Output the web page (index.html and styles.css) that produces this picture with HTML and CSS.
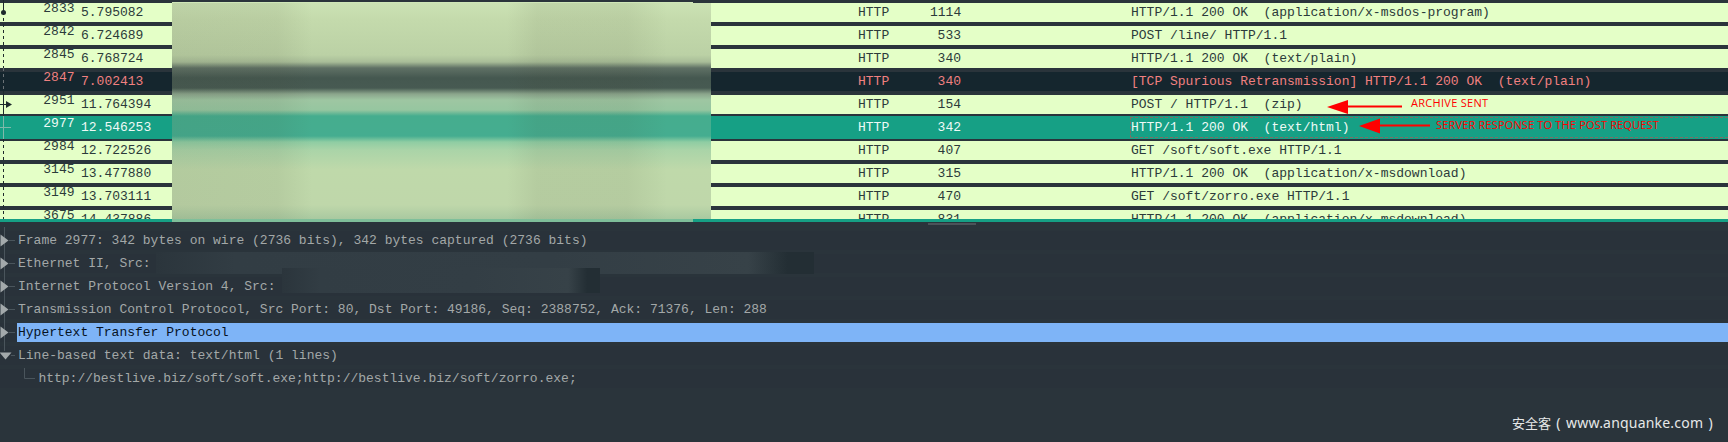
FILE: index.html
```html
<!DOCTYPE html>
<html lang="en">
<head>
<meta charset="utf-8">
<title>Packet capture</title>
<link rel="stylesheet" href="styles.css">
</head>
<body>
<main class="app">
  <section class="packets">
    <div class="row"><span class="num">2833</span><span class="time">5.795082</span><span class="proto">HTTP</span><span class="len">1114</span><span class="info">HTTP/1.1 200 OK  (application/x-msdos-program)</span></div>
    <div class="row"><span class="num">2842</span><span class="time">6.724689</span><span class="proto">HTTP</span><span class="len">533</span><span class="info">POST /line/ HTTP/1.1</span></div>
    <div class="row"><span class="num">2845</span><span class="time">6.768724</span><span class="proto">HTTP</span><span class="len">340</span><span class="info">HTTP/1.1 200 OK  (text/plain)</span></div>
    <div class="row bad"><span class="num">2847</span><span class="time">7.002413</span><span class="proto">HTTP</span><span class="len">340</span><span class="info">[TCP Spurious Retransmission] HTTP/1.1 200 OK  (text/plain)</span></div>
    <div class="row"><span class="num">2951</span><span class="time">11.764394</span><span class="proto">HTTP</span><span class="len">154</span><span class="info">POST / HTTP/1.1  (zip)</span></div>
    <div class="row sel"><span class="num">2977</span><span class="time">12.546253</span><span class="proto">HTTP</span><span class="len">342</span><span class="info">HTTP/1.1 200 OK  (text/html)</span></div>
    <div class="row"><span class="num">2984</span><span class="time">12.722526</span><span class="proto">HTTP</span><span class="len">407</span><span class="info">GET /soft/soft.exe HTTP/1.1</span></div>
    <div class="row"><span class="num">3145</span><span class="time">13.477880</span><span class="proto">HTTP</span><span class="len">315</span><span class="info">HTTP/1.1 200 OK  (application/x-msdownload)</span></div>
    <div class="row"><span class="num">3149</span><span class="time">13.703111</span><span class="proto">HTTP</span><span class="len">470</span><span class="info">GET /soft/zorro.exe HTTP/1.1</span></div>
    <div class="row"><span class="num">3675</span><span class="time">14.437886</span><span class="proto">HTTP</span><span class="len">831</span><span class="info">HTTP/1.1 200 OK  (application/x-msdownload)</span></div>
  </section>
  <div class="strip"></div>
  <div class="thumb"></div>

  <section class="tree">
    <div class="node"><svg class="exp" viewBox="0 0 17 19"><path class="tl" d="M4.5 -4V23M9 9.5H15"/><path class="tri" d="M0.5 3.500L8.500 9.500L0.500 15.500Z"/></svg><span class="label">Frame 2977: 342 bytes on wire (2736 bits), 342 bytes captured (2736 bits)</span></div>
    <div class="node"><svg class="exp" viewBox="0 0 17 19"><path class="tl" d="M4.5 -4V23M9 9.5H15"/><path class="tri" d="M0.5 3.500L8.500 9.500L0.500 15.500Z"/></svg><span class="label">Ethernet II, Src:</span></div>
    <div class="node"><svg class="exp" viewBox="0 0 17 19"><path class="tl" d="M4.5 -4V23M9 9.5H15"/><path class="tri" d="M0.5 3.500L8.500 9.500L0.500 15.500Z"/></svg><span class="label">Internet Protocol Version 4, Src:</span></div>
    <div class="node"><svg class="exp" viewBox="0 0 17 19"><path class="tl" d="M4.5 -4V23M9 9.5H15"/><path class="tri" d="M0.5 3.500L8.500 9.500L0.500 15.500Z"/></svg><span class="label">Transmission Control Protocol, Src Port: 80, Dst Port: 49186, Seq: 2388752, Ack: 71376, Len: 288</span></div>
    <div class="node on"><svg class="exp" viewBox="0 0 17 19"><path class="tl" d="M4.5 -4V23M9 9.5H15"/><path class="tri" d="M0.5 3.500L8.500 9.500L0.500 15.500Z"/></svg><span class="label">Hypertext Transfer Protocol</span></div>
    <div class="node"><svg class="exp" viewBox="0 0 17 19"><path class="tl" d="M4.5 -4V5M11 9.500H15"/><path class="tri" d="M-0.500 6.500H11.500L5.500 13.500Z"/></svg><span class="label">Line-based text data: text/html (1 lines)</span></div>
    <div class="node child"><svg class="exp wide" viewBox="0 0 37 19"><path class="tl" d="M24.5 -1V9.5H35"/></svg><span class="label">http://bestlive.biz/soft/soft.exe;http://bestlive.biz/soft/zorro.exe;</span></div>
  </section>

  <div class="smear"><div class="smear-tone"></div></div>
  <div class="redact eth"></div>
  <div class="redact ip"></div>

  <svg class="gutter" viewBox="0 0 16 222">
    <path class="g-solid" d="M3.5 0V12"/>
    <path class="g-dash" d="M3.5 12V68"/>
    <path class="g-grey" d="M3.5 68V91"/>
    <path class="g-solid" d="M3.5 91V116M0 104.5H6"/>
    <path class="g-head" d="M6 101L12 104.5L6 108Z"/>
    <circle class="g-head" cx="3.5" cy="12.5" r="2.5"/>
    <path class="g-pale" d="M3.5 116V139M0 127.5H11"/>
    <path class="g-dash" d="M3.5 139V219"/>
  </svg>

  <svg class="arrows" viewBox="0 0 1728 140">
    <path class="a-line" d="M1346 106.500H1402"/>
    <path class="a-head" d="M1327 107L1348 100V114Z"/>
    <path class="a-line" d="M1378 125.500H1430"/>
    <path class="a-head" d="M1359 126L1380 118.500V133.500Z"/>
  </svg>
  <span class="note n1">ARCHIVE SENT</span>
  <span class="note n2">SERVER RESPONSE TO THE POST REQUEST</span>
  <span class="mark"><span class="cjk">安全客</span> ( www.anquanke.com )</span>
</main>
</body>
</html>
```
FILE: styles.css
```css
html, body {
  margin: 0;
  padding: 0;
  background: #2a343b;
}

.app {
  position: relative;
  width: 1728px;
  height: 442px;
  overflow: hidden;
  font: 13px/20px "Liberation Mono", monospace;
  color: #a3a8a8;
}

.packets {
  height: 216px;
  padding-top: 3px;
  overflow: hidden;
}

.row {
  position: relative;
  display: grid;
  grid-template-columns: 74.5px 783.5px 72px 31px 1fr;
  height: 19px;
  margin-bottom: 4px;
  background: #e4ffc7;
  color: #2b3a3a;
  white-space: pre;
}

.row.bad {
  background: #15262e;
  color: #f08080;
}

.row.sel {
  height: 23px;
  margin: -2px 0 2px;
  padding-top: 2px;
  box-sizing: border-box;
  background: #16a085;
  color: #eefaf6;
}

.row.sel::after {
  content: "";
  position: absolute;
  left: 1130px;
  right: 0;
  top: 1px;
  bottom: 1px;
  border: 1px dashed #c0504f;
  border-right: 0;
  opacity: 0.6;
}

.num {
  text-align: right;
  line-height: 11px;
}

.time {
  padding-left: 6.5px;
}

.len {
  text-align: right;
}

.info {
  padding-left: 170px;
}

.strip {
  height: 3px;
  background: #16a085;
}

.thumb {
  position: absolute;
  left: 928px;
  top: 223px;
  width: 48px;
  height: 2px;
  background: #4b5359;
}

.tree {
  display: flex;
  flex-direction: column;
  gap: 4px;
  padding-top: 9px;
}

.node {
  display: flex;
  height: 19px;
  background: #29323a;
  white-space: pre;
}

.exp {
  flex: none;
  width: 17px;
  height: 19px;
  overflow: visible;
}

.exp.wide {
  width: 37px;
}

.tl {
  fill: none;
  stroke: #4a555c;
  stroke-width: 1;
}

.tri {
  fill: #a3a9ab;
}

.label {
  flex: 1;
  padding-left: 1px;
}

.node.on .label {
  background: #7eb4f7;
  color: #06121f;
}

.node.child .label {
  padding-left: 1.4px;
}

.smear {
  position: absolute;
  left: 172px;
  top: 3px;
  width: 539px;
  height: 216px;
  background: linear-gradient(180deg,
    #cbe2b4 0, #c4daac 17px, #bbd1a5 52px, #a8bd98 59px, #5f7165 65px,
    #455850 75px, #475a52 85px, #8ba58c 91px, #9ec6a2 97px, #96c6a0 107px,
    #45ad8e 113px, #45ad90 133px, #8fcda3 139px, #aad4a8 147px, #bfd9aa 167px,
    #bfd7aa 202px, #a9c9a0 216px);
}

.smear::before {
  content: "";
  position: absolute;
  left: 0;
  top: -1px;
  width: 521px;
  height: 1px;
  background: #cfe6b8;
}

.smear::after {
  content: "";
  position: absolute;
  left: 0;
  top: 216px;
  width: 521px;
  height: 3px;
  background: #7fbf9a;
}

.smear-tone {
  height: 100%;
  background: linear-gradient(90deg,
    rgba(60, 60, 40, 0.09) 0, rgba(60, 60, 40, 0.08) 105px, rgba(60, 60, 40, 0) 140px,
    rgba(60, 60, 40, 0) 335px, rgba(60, 60, 40, 0.08) 365px, rgba(60, 60, 40, 0.08) 455px,
    rgba(60, 60, 40, 0) 495px);
}

.redact {
  position: absolute;
  background: linear-gradient(90deg, #2b353c 0, #323d44 12%, #333e45 60%, #374248 90%, #232e34 96%, #232e34 100%);
}

.redact.eth {
  left: 156px;
  top: 252px;
  width: 658px;
  height: 22px;
}

.redact.ip {
  left: 282px;
  top: 268px;
  width: 318px;
  height: 25px;
}

.gutter {
  position: absolute;
  left: 0;
  top: 0;
  width: 16px;
  height: 222px;
}

.g-solid {
  fill: none;
  stroke: #1d2a2c;
}

.g-dash {
  fill: none;
  stroke: #1d2a2c;
  stroke-dasharray: 3 3;
}

.g-grey {
  fill: none;
  stroke: #6b7276;
  stroke-dasharray: 3 3;
}

.g-pale {
  fill: none;
  stroke: #7fb9aa;
}

.g-head {
  fill: #1d2a2c;
}

.arrows {
  position: absolute;
  left: 0;
  top: 0;
  width: 1728px;
  height: 140px;
}

.a-line {
  fill: none;
  stroke: #f00;
  stroke-width: 2;
}

.a-head {
  fill: #f00;
}

.note {
  position: absolute;
  font: 11px/14px "Open Sans", sans-serif;
  color: #f00;
  white-space: nowrap;
}

.note.n1 {
  left: 1411px;
  top: 96px;
  letter-spacing: 0.3px;
}

.note.n2 {
  left: 1436px;
  top: 118px;
  letter-spacing: 0.17px;
}

.mark {
  position: absolute;
  left: 1512px;
  top: 413px;
  font: 14px/20px "Noto Sans", "Noto Sans CJK SC", sans-serif;
  letter-spacing: 0.2px;
  word-spacing: 1.5px;
  color: #e6e8e8;
  white-space: nowrap;
}

.cjk {
  font-size: 13px;
  letter-spacing: 0;
}
```
